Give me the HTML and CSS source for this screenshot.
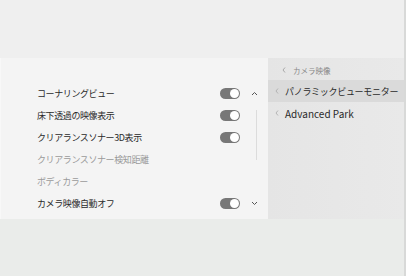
FILE: index.html
```html
<!DOCTYPE html>
<html lang="ja">
<head>
  <meta charset="UTF-8">
  <title>カメラ設定</title>
  <link rel="stylesheet" href="styles.css">
</head>
<body>

<div class="screen">
  <div class="top-space"></div>

  <div class="panel">
    <!-- settings list -->
    <div class="settings">
      <div class="row">
        <span class="label">コーナリングビュー</span>
        <span class="toggle"></span>
        <span class="side"><svg width="7" height="5" viewBox="0 0 7 5"><path d="M1 4 L3.5 1.5 L6 4" fill="none" stroke="#555" stroke-width="1"/></svg></span>
      </div>
      <div class="row">
        <span class="label">床下透過の映像表示</span>
        <span class="toggle"></span>
        <span class="side"></span>
      </div>
      <div class="row">
        <span class="label">クリアランスソナー3D表示</span>
        <span class="toggle"></span>
        <span class="side"></span>
      </div>
      <div class="row off">
        <span class="label">クリアランスソナー検知距離</span>
        <span class="side"></span>
      </div>
      <div class="row off">
        <span class="label">ボディカラー</span>
        <span class="side"></span>
      </div>
      <div class="row">
        <span class="label">カメラ映像自動オフ</span>
        <span class="toggle"></span>
        <span class="side"><svg width="7" height="5" viewBox="0 0 7 5"><path d="M1 1 L3.5 3.5 L6 1" fill="none" stroke="#555" stroke-width="1"/></svg></span>
      </div>
      <div class="scrollbar"></div>
    </div>

    <!-- menu -->
    <div class="menu">
      <div class="crumb"><svg class="chev" width="4" height="6" viewBox="0 0 4 6"><path d="M3 0.5 L1 3 L3 5.5" fill="none" stroke="#999" stroke-width="0.8"/></svg>カメラ映像</div>
      <div class="item active"><svg class="chev" width="4" height="6" viewBox="0 0 4 6"><path d="M3 0.5 L1 3 L3 5.5" fill="none" stroke="#aaa" stroke-width="0.8"/></svg>パノラミックビューモニター</div>
      <div class="item latin"><svg class="chev" width="4" height="6" viewBox="0 0 4 6"><path d="M3 0.5 L1 3 L3 5.5" fill="none" stroke="#aaa" stroke-width="0.8"/></svg>Advanced Park</div>
    </div>
  </div>

  <div class="bottom-space"></div>
</div>

</body>
</html>
```

FILE: styles.css
```css
body {
  margin: 0;
  font-family: "Noto Sans CJK JP", "Noto Sans", sans-serif;
  background: #ebeceb;
}

.screen {
  width: 406px;
  height: 276px;
  display: flex;
  flex-direction: column;
  background: #edeeed;
  border-right: 2px solid #d8d9d8;
  box-sizing: border-box;
}

.top-space { height: 58px; background: #efefef; }
.bottom-space { flex: 1; background: #eaecea; }

.panel {
  display: flex;
  height: 161px;
}

.settings {
  position: relative;
  width: 268px;
  background: #f4f4f4;
  padding: 24px 0 0 36px;
  box-sizing: border-box;
  border-left: 1px solid #f8f8f8;
}

.row {
  display: flex;
  align-items: center;
  height: 22px;
  font-size: 9px;
  letter-spacing: -0.4px;
  color: #2a2a2a;
}

.row.off { color: #9a9a9a; }

.label { flex: 1; }

.toggle {
  position: relative;
  width: 20px;
  height: 11px;
  border-radius: 6px;
  background: #777;
}

.toggle::after {
  content: "";
  position: absolute;
  right: 1px;
  top: 1px;
  width: 9px;
  height: 9px;
  border-radius: 50%;
  background: #fff;
}

.side {
  display: flex;
  justify-content: center;
  align-items: center;
  width: 28px;
}

.scrollbar {
  position: absolute;
  left: 255px;
  top: 52px;
  width: 1px;
  height: 50px;
  background: #dcdcdc;
}

.menu {
  flex: 1;
  background: linear-gradient(to right, #e5e5e5, #e9e9e9);
  padding-top: 2px;
}

.crumb {
  display: flex;
  align-items: center;
  height: 20px;
  padding-left: 14px;
  font-size: 7.5px;
  color: #888;
}

.crumb .chev { margin-right: 7px; }

.item {
  display: flex;
  align-items: center;
  height: 22px;
  padding-left: 7px;
  font-size: 9px;
  letter-spacing: -0.3px;
  color: #2a2a2a;
  white-space: nowrap;
}

.item.latin {
  font-size: 10px;
  letter-spacing: 0;
}

.item.active { background: #dadada; }

.chev {
  margin-right: 6px;
  flex: none;
}
```
